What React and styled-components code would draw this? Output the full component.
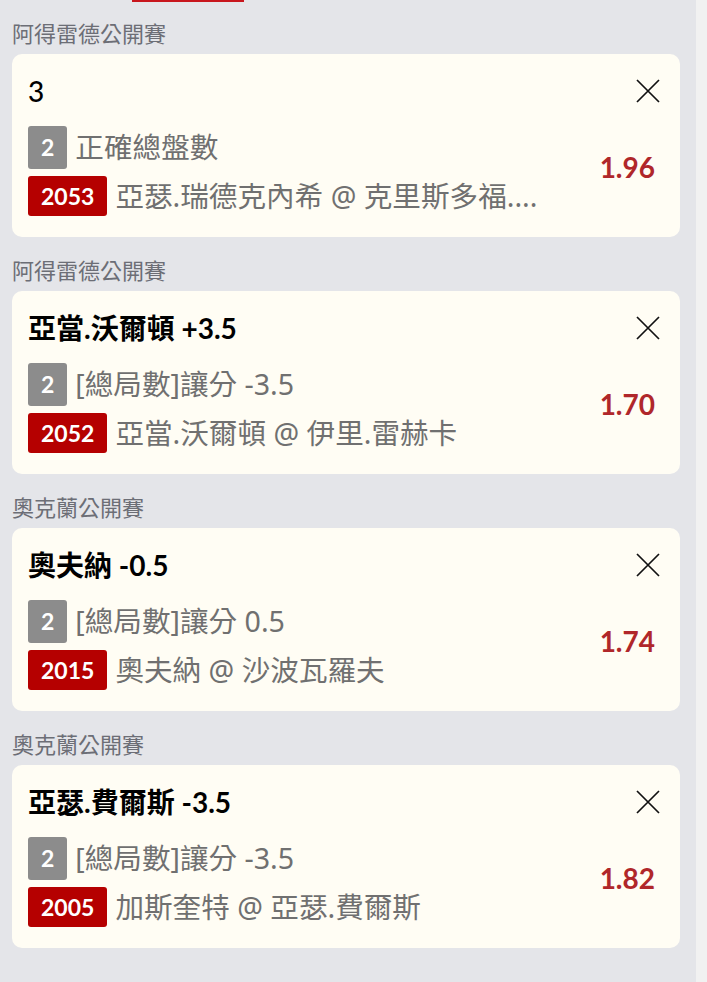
import React from 'react'
import styled, { createGlobalStyle } from 'styled-components'

const bets = [
  {
    league: '阿得雷德公開賽',
    title: '3',
    light: true,
    market: '正確總盤數',
    match: '2053',
    teams: '亞瑟.瑞德克內希 @ 克里斯多福....',
    odds: '1.96',
  },
  {
    league: '阿得雷德公開賽',
    title: '亞當.沃爾頓 +3.5',
    market: '[總局數]讓分 -3.5',
    match: '2052',
    teams: '亞當.沃爾頓 @ 伊里.雷赫卡',
    odds: '1.70',
  },
  {
    league: '奧克蘭公開賽',
    title: '奧夫納 -0.5',
    market: '[總局數]讓分 0.5',
    match: '2015',
    teams: '奧夫納 @ 沙波瓦羅夫',
    odds: '1.74',
  },
  {
    league: '奧克蘭公開賽',
    title: '亞瑟.費爾斯 -3.5',
    market: '[總局數]讓分 -3.5',
    match: '2005',
    teams: '加斯奎特 @ 亞瑟.費爾斯',
    odds: '1.82',
  },
]

function CloseIcon() {
  return (
    <svg width="24" height="24" viewBox="0 0 24 24" fill="none">
      <path d="M1 1L23 23M23 1L1 23" stroke="#111" strokeWidth="1.7" />
    </svg>
  )
}

function App() {
  return (
    <>
      <GlobalStyle />
      <Page>
        <Main>
          <TabMark />
          {bets.map((bet, i) => (
            <Group key={i}>
              <League>{bet.league}</League>
              <Card>
                <Head>
                  <Title $light={bet.light}>{bet.title}</Title>
                  <CloseButton aria-label="remove">
                    <CloseIcon />
                  </CloseButton>
                </Head>
                <Body>
                  <Lines>
                    <Line>
                      <Badge $tone="gray">2</Badge>
                      <LineText>{bet.market}</LineText>
                    </Line>
                    <Line>
                      <Badge $tone="red">{bet.match}</Badge>
                      <LineText>{bet.teams}</LineText>
                    </Line>
                  </Lines>
                  <Odds>{bet.odds}</Odds>
                </Body>
              </Card>
            </Group>
          ))}
        </Main>
        <Track />
      </Page>
    </>
  )
}

const GlobalStyle = createGlobalStyle`
  body {
    margin: 0;
    background: #f1f1f1;
    font-family: "Noto Sans", "Noto Sans CJK TC", sans-serif;
  }
`

const Page = styled.div`
  display: flex;
  min-height: 982px;
`

const Main = styled.div`
  width: 696px;
  background: #e4e5e9;
  padding: 0 16px 40px 12px;
  box-sizing: border-box;
  display: flex;
  flex-direction: column;
  gap: 17px;
`

const Track = styled.div`
  flex: 1;
  background: #f1f1f1;
`

const TabMark = styled.div`
  width: 112px;
  height: 2px;
  margin-left: 120px;
  margin-bottom: -2px;
  background: #c8161d;
`

const Group = styled.section`
  display: flex;
  flex-direction: column;
  gap: 7px;
`

const League = styled.div`
  font-family: "Noto Sans CJK TC", sans-serif;
  font-size: 22px;
  line-height: 30px;
  color: #6c6e76;
`

const Card = styled.div`
  background: #fffdf4;
  border-radius: 10px;
  padding: 19px 20px 21px 16px;
`

const Head = styled.div`
  display: flex;
  align-items: center;
  justify-content: space-between;
  height: 36px;
`

const Title = styled.div`
  font-family: Lato, "Noto Sans CJK TC", sans-serif;
  font-size: 28px;
  line-height: 36px;
  font-weight: ${(p) => (p.$light ? 500 : 700)};
  color: #000;
`

const CloseButton = styled.button`
  border: 0;
  background: none;
  padding: 0;
  width: 24px;
  height: 24px;
  display: flex;
`

const Body = styled.div`
  margin-top: 17px;
  display: flex;
  align-items: center;
`

const Lines = styled.div`
  flex: 1;
  display: flex;
  flex-direction: column;
  gap: 7px;
  min-width: 0;
`

const Line = styled.div`
  display: flex;
  align-items: center;
  gap: 8px;
`

const Badge = styled.span`
  display: inline-flex;
  align-items: center;
  justify-content: center;
  height: ${(p) => (p.$tone === 'red' ? 40 : 43)}px;
  padding: 0 13px;
  border-radius: 3px;
  background: ${(p) => (p.$tone === 'red' ? '#b50000' : '#8c8c8c')};
  color: #fff;
  font-family: Lato, sans-serif;
  font-weight: 700;
  font-size: 23px;
  line-height: 1;
`

const LineText = styled.span`
  font-size: 28.6px;
  line-height: 1;
  color: #707070;
  white-space: nowrap;
`

const Odds = styled.div`
  margin-right: 5px;
  padding-bottom: 8px;
  font-family: Lato, sans-serif;
  font-weight: 700;
  font-size: 28px;
  line-height: 1;
  color: #b0272a;
`

export default App
